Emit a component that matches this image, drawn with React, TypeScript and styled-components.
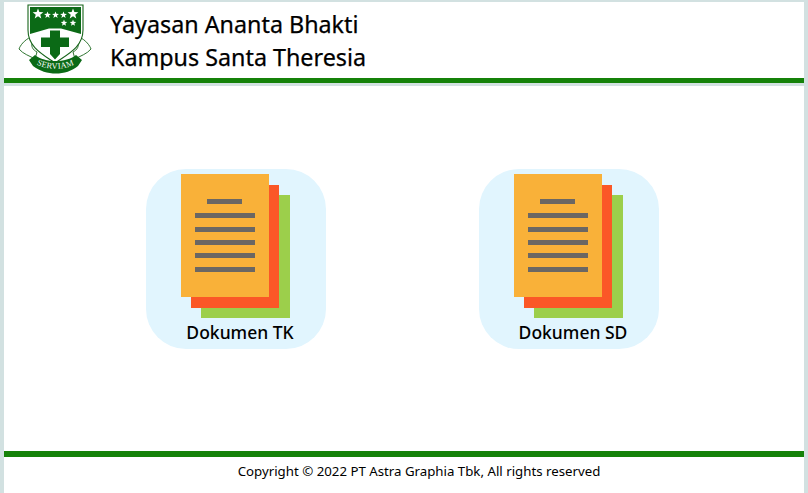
import React from "react";
import styled, { createGlobalStyle } from "styled-components";

const GlobalStyle = createGlobalStyle`
  html, body {
    margin: 0;
    padding: 0;
    height: 100%;
    background: #d2e1e1;
    font-family: "Noto Sans", "Open Sans", sans-serif;
    color: #000;
  }
`;

const Page = styled.div`
  width: 800px;
  height: 493px;
  margin: 0 4px;
  padding-top: 2px;
  box-sizing: border-box;
  display: flex;
  flex-direction: column;
`;

const Header = styled.header`
  height: 76px;
  background: #fff;
  display: flex;
  align-items: flex-start;
  padding-left: 13px;
  flex-shrink: 0;
  overflow: hidden;
`;

// the second line's descenders are clipped in the original too
const Titles = styled.div`
  margin-left: 17px;
  margin-top: 6px;
  height: 62px;
  overflow: hidden;
  font-size: 23.3px;
  line-height: 33px;
  -webkit-text-stroke: 0.25px #000;
`;

const Rule = styled.div<{ $thick?: boolean }>`
  height: ${({ $thick }) => ($thick ? "6px" : "5px")};
  background: #158209;
  flex-shrink: 0;
`;

const Main = styled.main`
  flex: 1;
  margin-top: 3px;
  background: #fff;
  display: flex;
  align-items: flex-start;
  padding: 83px 0 0 142px;
  gap: 153px;
`;

const Tile = styled.div`
  width: 180px;
  height: 180px;
  border-radius: 40px;
  background: #e1f5fe;
  position: relative;
  display: flex;
  flex-direction: column;
  align-items: center;
  justify-content: flex-end;
`;

const Stack = styled.svg`
  position: absolute;
  left: 34px;
  top: 5px;
`;

const TileLabel = styled.span`
  font-size: 17.5px;
  font-weight: 500;
  line-height: 24px;
  padding-bottom: 5px;
  position: relative;
  left: 4px;
`;

const Footer = styled.footer`
  height: 36px;
  background: #fff;
  text-align: center;
  font-size: 13.25px;
  line-height: 28px;
  flex-shrink: 0;
  padding-left: 30px;
`;

const starPoints = (cx: number, cy: number, r: number) =>
  Array.from({ length: 10 }, (_, i) => {
    const radius = i % 2 ? r * 0.42 : r;
    const angle = (Math.PI / 5) * i - Math.PI / 2;
    return `${(cx + radius * Math.cos(angle)).toFixed(2)},${(cy + radius * Math.sin(angle)).toFixed(2)}`;
  }).join(" ");

const stars = [
  [38, 14, 5.6],
  [47.5, 15, 3.6],
  [55.5, 15, 3.6],
  [63.5, 15, 3.6],
  [73, 14, 5.6],
  [64, 23, 3.4],
  [73, 23, 3.4],
];

const Logo = () => (
  <svg width="76" height="76" viewBox="17 2 76 76">
    {/* ribbon curls */}
    <path
      d="M31 37 C24 40 20 46 19 49 C23 54 30 56 35 59 L37 52 C33 50 30 46 33 41 Z"
      fill="#fff"
      stroke="#17641a"
      strokeWidth="0.9"
    />
    <path
      d="M79 37 C86 40 90 46 91 49 C87 54 80 56 75 59 L73 52 C77 50 80 46 77 41 Z"
      fill="#fff"
      stroke="#17641a"
      strokeWidth="0.9"
    />
    {/* shield */}
    <path
      d="M28 5 H83 V30 C83 47 68 54 55 63 C42 54 28 47 28 30 Z"
      fill="#fff"
      stroke="#17641a"
      strokeWidth="1.1"
    />
    <path d="M30 7 H81 V34 L61 28.5 H49 L30 34 Z" fill="#0b6a16" />
    <path
      d="M50 30.5 H60 V37.5 H69 V47 H60 V54 L55 59.5 L50 54 V47 H41 V37.5 H50 Z"
      fill="#0b6a16"
    />
    {stars.map(([x, y, r]) => (
      <polygon key={`${x}-${y}`} points={starPoints(x, y, r)} fill="#fff" />
    ))}
    {/* banner */}
    <path
      d="M29 60 L35 55 C45 63 66 63 76 55 L82 60 L78 66 C66 76 46 76 33 66 Z"
      fill="#0b6a16"
    />
    <path id="banner-curve" d="M33 62 C44 71 67 71 78 62" fill="none" />
    <text fontSize="8.4" fontFamily="Liberation Serif, serif" fill="#fff" letterSpacing="0.3">
      <textPath href="#banner-curve" startOffset="50%" textAnchor="middle">
        SERVIAM
      </textPath>
    </text>
  </svg>
);

const Documents = () => (
  <Stack width="110" height="146" viewBox="0 0 110 146">
    <rect x="21" y="21" width="89" height="123" fill="#9ccf4b" />
    <rect x="11" y="11" width="88" height="123" fill="#fb5727" />
    <rect x="1" y="0" width="88" height="123" fill="#f9b139" />
    <g fill="#6b6763">
      <rect x="27" y="25" width="35" height="5" />
      <rect x="15" y="39" width="60" height="5" />
      <rect x="15" y="53" width="60" height="5" />
      <rect x="15" y="66" width="60" height="5" />
      <rect x="15" y="79" width="60" height="5" />
      <rect x="15" y="93" width="60" height="5" />
    </g>
  </Stack>
);

const App = () => (
  <>
    <GlobalStyle />
    <Page>
      <Header>
        <Logo />
        <Titles>
          <div>Yayasan Ananta Bhakti</div>
          <div>Kampus Santa Theresia</div>
        </Titles>
      </Header>
      <Rule />
      <Main>
        <Tile>
          <Documents />
          <TileLabel>Dokumen TK</TileLabel>
        </Tile>
        <Tile>
          <Documents />
          <TileLabel>Dokumen SD</TileLabel>
        </Tile>
      </Main>
      <Rule $thick />
      <Footer>Copyright © 2022 PT Astra Graphia Tbk, All rights reserved</Footer>
    </Page>
  </>
);

export default App;
